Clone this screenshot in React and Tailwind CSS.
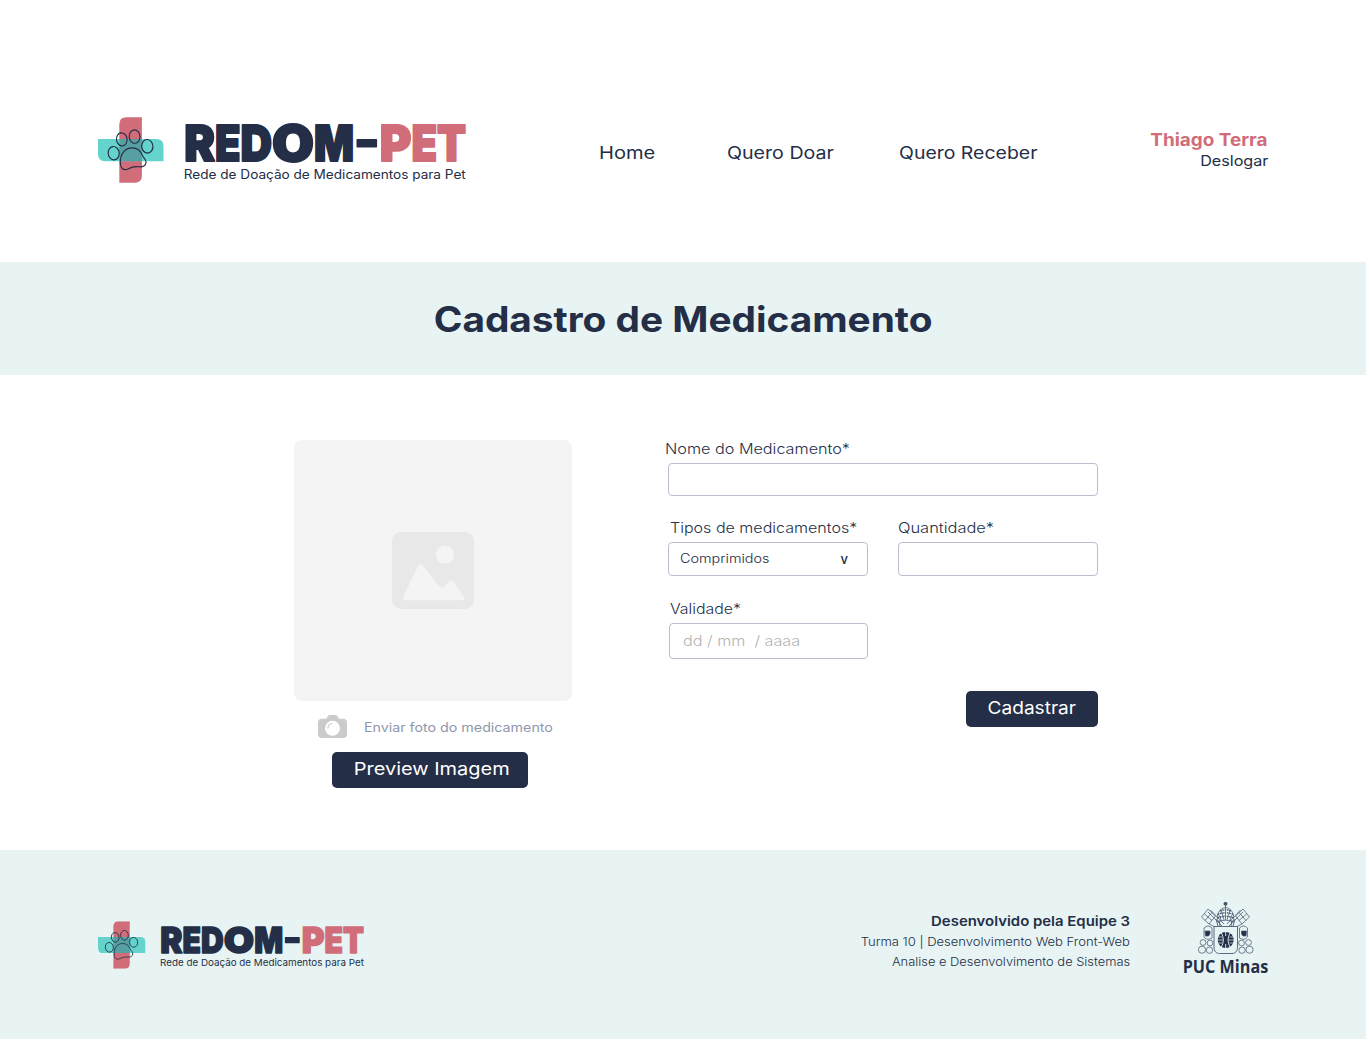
function Paw({ className, width, height }) {
  return (
    <svg className={className} width={width} height={height} viewBox="0 0 66 66" fill="none">
      <path d="M28.5 0.3H43.9V58.500Q43.900 65.700 36.700 65.700H21.300V7.500Q21.300 0.300 28.500 0.300Z" fill="#d16d79" />
      <path d="M0 22H58.300Q65.500 22 65.500 29.200V44.200H7.200Q0 44.200 0 37Z" fill="#63d3cc" />
      <path d="M21.300 22H43.900V44.200H21.300Z" fill="#579fa1" />
      <g stroke="#242e47" strokeWidth="1.15">
        <ellipse cx="15.700" cy="36.200" rx="5.500" ry="6.700" transform="rotate(-8 15.7 36.2)" />
        <ellipse cx="23.800" cy="22.400" rx="5.300" ry="6.600" transform="rotate(-8 23.8 22.4)" />
        <ellipse cx="36.600" cy="19.600" rx="5.400" ry="6.700" transform="rotate(-4 36.6 19.6)" />
        <ellipse cx="49.300" cy="29.300" rx="5.600" ry="6.800" transform="rotate(-6 49.3 29.3)" />
        <path d="M22.300 45C22.100 36.500 27.500 30.900 34 30.900C40.300 30.900 43 34.600 44.600 38.700C46 41.800 48.400 42.400 48.100 45.400C47.700 48.700 45 50.300 41 49.800C36.500 49.200 33.600 50 30.500 51.700C25.500 54.300 22.400 51.500 22.300 45Z" />
      </g>
    </svg>
  );
}

function Logo({ className }) {
  return (
    <svg className={`${className} overflow-visible`} viewBox="0 0 368 66">
      <Paw width="66" height="66" />
      <g fontFamily="Inter" fontWeight="900" fontSize="50" strokeWidth="2" strokeLinejoin="round">
        <g fill="#242e47" stroke="#242e47">
          <text y="43.600">
            <tspan x="86.200" textLength="30.800" lengthAdjust="spacingAndGlyphs">R</tspan>
            <tspan x="117" textLength="25.500" lengthAdjust="spacingAndGlyphs">E</tspan>
            <tspan x="142.500" textLength="31.500" lengthAdjust="spacingAndGlyphs">D</tspan>
            <tspan x="174" textLength="42" lengthAdjust="spacingAndGlyphs">O</tspan>
            <tspan x="216" textLength="40" lengthAdjust="spacingAndGlyphs">M</tspan>
          </text>
          <path d="M259.300 22.700H278.300V29.700H259.300Z" strokeWidth="1.600" />
        </g>
        <text y="43.600" fill="#d16d79" stroke="#d16d79">
          <tspan x="281.800" textLength="31.600" lengthAdjust="spacingAndGlyphs">P</tspan>
          <tspan x="313.400" textLength="25.600" lengthAdjust="spacingAndGlyphs">E</tspan>
          <tspan x="339" textLength="29" lengthAdjust="spacingAndGlyphs">T</tspan>
        </text>
      </g>
      <text x="85.800" y="61.900" fontFamily="Inter" fontSize="12.800" fill="#242e47" textLength="282" lengthAdjust="spacingAndGlyphs">
        Rede de Doação de Medicamentos para Pet
      </text>
    </svg>
  );
}

function PucMinas({ className }) {
  return (
    <svg className={`${className} overflow-visible`} viewBox="0 0 86 76" fill="none" stroke="#4a5873" strokeWidth="0.750">
      {/* tiara */}
      <circle cx="42.500" cy="3.800" r="1.600" fill="#33415f" />
      <path d="M42.500 2V8M35 22C32.500 15 36.500 8 42.500 7.500C48.500 8 52.500 15 50 22Q42.500 18.500 35 22Z" />
      <path d="M34.500 14.500Q42.500 11 50.500 14.500M34.500 18Q42.500 14.500 50.500 18M37 11Q42.500 8.500 48 11" stroke="#33415f" strokeWidth="1.200" strokeDasharray="1.6 0.8" />
      <path d="M38 10L41 20M47 10L44 20M42.500 8V20M36 15L38.500 21M49 15L46.500 21" />
      {/* crossed keys */}
      <path d="M25 12L39 26M27.500 10L41 24M60 12L46 26M57.500 10L44 24" />
      <path d="M18.500 17L25 9L32.500 16L26 24ZM66.500 17L60 9L52.500 16L59 24Z" />
      <path d="M21.500 14L29 20.500M22 20.500L29 12.500M63.500 14L56 20.500M63 20.500L56 12.500M26 24L32 27M59 24L53 27" />
      <path d="M33 19L35 26M36 20L37 26M52 19L50 26M49 20L48 26" strokeWidth="0.900" />
      {/* shield */}
      <path d="M31 26.500H54.500V47C54.500 51 52.500 53.500 49 53.500H36.500C33 53.500 31 51 31 47Z" fill="#e7f4f3" strokeWidth="0.900" />
      <circle cx="42.700" cy="40" r="8" fill="#242e47" stroke="none" />
      <path d="M38.200 32.500Q42.500 40 38.200 47.500M47.200 32.500Q42.900 40 47.200 47.500M42.700 32V36M42.700 44V48" stroke="#e7f4f3" strokeWidth="0.900" />
      <path d="M34.500 37H39M34 40H40M34.500 43H39M46.500 37H51M45.500 40H51.500M46.500 43H51" stroke="#e7f4f3" strokeWidth="0.700" />
      {/* ribbons and scrolls */}
      <path d="M21 28Q25 24 29 28V38Q24 41 21 37ZM64.500 28Q60.500 24 56.500 28V38Q61.500 41 64.500 37Z" />
      <path d="M22 31H27V34L25.500 36H22.500ZM63.500 31H58.500V34L60 36H63Z" fill="#242e47" />
      <circle cx="20" cy="42.500" r="2.900" />
      <circle cx="27" cy="43" r="2.900" />
      <circle cx="19" cy="49.700" r="3.600" />
      <circle cx="26.500" cy="50.200" r="3.200" />
      <circle cx="65.500" cy="42.500" r="2.900" />
      <circle cx="58.500" cy="43" r="2.900" />
      <circle cx="66.500" cy="49.700" r="3.600" />
      <circle cx="59" cy="50.200" r="3.200" />
      <text x="-0.300" y="72.700" fontFamily="Open Sans" fontWeight="700" fontSize="17.800" fill="#242e47" stroke="none" textLength="85.500" lengthAdjust="spacingAndGlyphs">
        PUC Minas
      </text>
    </svg>
  );
}

const fit = "inline-block whitespace-pre origin-left";
const fitEnd = "inline-block whitespace-pre origin-right";

function Header() {
  return (
    <header className="flex h-[262px] items-start pl-[98px] pr-[98px] pt-[117px]">
      <Logo className="h-[66px] w-[368px] shrink-0" />
      <nav className="ml-[133px] mt-6 flex text-[17.2px] font-normal leading-6">
        <a className="w-32"><span className={`${fit} scale-x-[1.17]`}>Home</span></a>
        <a className="w-[172px]"><span className={`${fit} scale-x-[1.142]`}>Quero Doar</span></a>
        <a className="w-[139px]"><span className={`${fit} scale-x-[1.132]`}>Quero Receber</span></a>
      </nav>
      <div className="ml-auto mt-3 flex flex-col items-end">
        <span className={`${fitEnd} scale-x-[1.1] text-[17.2px] font-bold leading-[22px] text-[#d16d79]`}>Thiago Terra</span>
        <span className={`${fitEnd} scale-x-[1.13] text-[14.3px] font-normal leading-5`}>Deslogar</span>
      </div>
    </header>
  );
}

function Upload() {
  return (
    <section className="flex w-[278px] flex-col">
      <div className="flex h-[261px] items-start justify-center rounded-lg bg-[#f4f4f4] pt-[92px]">
        <svg className="h-[77px] w-[82px]" viewBox="0 0 82 77">
          <rect width="82" height="77" rx="9" fill="#e8e8e8" />
          <circle cx="53" cy="22.700" r="9.200" fill="#f4f4f4" />
          <path d="M26.500 33.300Q28.500 30 31 33.300L46 53.500Q49.500 57 53 53.500L56.500 50Q59.500 47 62 50.500L72 65Q73 68.200 70 68.200H13Q10 68.200 11 65Z" fill="#f4f4f4" />
        </svg>
      </div>
      <div className="ml-6 mt-3.5 flex h-6 items-start">
        <svg className="h-[23px] w-[29px] shrink-0" viewBox="0 0 29 23">
          <path d="M4 3.700H7.500Q8.800 3.700 9.200 2.200Q9.700 0 12 0H17.200Q19.500 0 20 2.200Q20.400 3.700 21.700 3.700H25Q29 3.700 29 7.700V19Q29 23 25 23H4Q0 23 0 19V7.700Q0 3.700 4 3.700Z" fill="#cbcbcb" />
          <circle cx="14.500" cy="13.300" r="7.500" fill="#fff" />
          <path d="M10 13Q10.200 9.300 14 8.500" fill="none" stroke="#cbcbcb" strokeWidth="1.200" strokeLinecap="round" />
        </svg>
        <span className={`${fit} ml-[17px] mt-0.5 scale-x-[1.15] text-[12.4px] font-normal leading-[22px] text-[#8f97ae]`}>Enviar foto do medicamento</span>
      </div>
      <button className="ml-[38px] mt-[13px] h-9 w-[196px] rounded-[5px] bg-[#242e47] pb-0.5 pl-[3px] text-[17.6px] font-normal leading-[34px] text-white">
        <span className="inline-block origin-center scale-x-[1.135]">Preview Imagem</span>
      </button>
    </section>
  );
}

function Form() {
  const field = "rounded border border-[#bcbed0] bg-white";
  const label = "block text-[14.3px] font-light leading-5";
  return (
    <form className="flex w-[433px] flex-col">
      <label className={label}><span className={`${fit} scale-x-[1.133]`}>Nome do Medicamento*</span></label>
      <div className={`${field} ml-[3px] mt-1 h-[33px]`} />
      <div className="ml-[3px] mt-[22px] flex gap-[30px]">
        <div className="w-[200px]">
          <label className={`${label} pl-0.5`}><span className={`${fit} scale-x-[1.122]`}>Tipos de medicamentos*</span></label>
          <div className={`${field} mt-1 flex h-[34px] items-start justify-between pl-[11px] pr-[19px] leading-8`}>
            <span className={`${fit} scale-x-[1.162] text-[12.4px] font-light`}>Comprimidos</span>
            <span className="text-[13px] font-medium">v</span>
          </div>
        </div>
        <div className="w-[200px]">
          <label className={label}><span className={`${fit} scale-x-[1.148]`}>Quantidade*</span></label>
          <div className={`${field} mt-1 h-[34px]`} />
        </div>
      </div>
      <div className="ml-1 mt-[23px] w-[199px]">
        <label className={`${label} pl-px`}><span className={`${fit} scale-x-[1.108]`}>Validade*</span></label>
        <div className={`${field} mt-1 h-9 pl-[13px] text-[14.3px] leading-[33px] text-[#b3b3b3]`}>
          <span className={`${fit} scale-x-[1.13] font-light`}>dd / mm  / aaaa</span>
        </div>
      </div>
      <button type="button" className="ml-auto mt-8 h-9 w-[132px] rounded-[5px] bg-[#242e47] pb-0.5 text-[17.6px] font-normal leading-[34px] text-white">
        <span className="inline-block origin-center scale-x-[1.085]">Cadastrar</span>
      </button>
    </form>
  );
}

function Footer() {
  return (
    <footer className="flex h-[189px] items-start bg-[#e7f4f3] pl-[98px] pr-[97px] pt-[50px]">
      <Logo className="mt-[21px] h-[48px] w-[266px] shrink-0" />
      <div className="ml-auto mr-[53px] mt-[11px] flex flex-col items-end text-[11.8px] font-light leading-5">
        <span className={`${fitEnd} scale-x-[1.105] text-[13.5px] font-semibold leading-[21px]`}>Desenvolvido pela Equipe 3</span>
        <span className={`${fitEnd} scale-x-[1.104]`}>Turma 10 | Desenvolvimento Web Front-Web</span>
        <span className={`${fitEnd} scale-x-[1.092]`}>Analise e Desenvolvimento de Sistemas</span>
      </div>
      <PucMinas className="h-[76px] w-[86px] shrink-0" />
    </footer>
  );
}

export default function App() {
  return (
    <div className="h-[1039px] w-[1366px] overflow-hidden bg-white font-['Inter',sans-serif] text-[#242e47]">
      <Header />
      <div className="flex h-[113px] justify-center bg-[#e7f4f3] pt-[37px]">
        <h1 className="h-10 origin-center scale-x-[1.108] whitespace-nowrap text-[35px] font-bold leading-10">Cadastro de Medicamento</h1>
      </div>
      <main className="flex h-[475px] items-start pl-[294px] pt-[65px]">
        <Upload />
        <div className="ml-[93px] -mt-px">
          <Form />
        </div>
      </main>
      <Footer />
    </div>
  );
}
